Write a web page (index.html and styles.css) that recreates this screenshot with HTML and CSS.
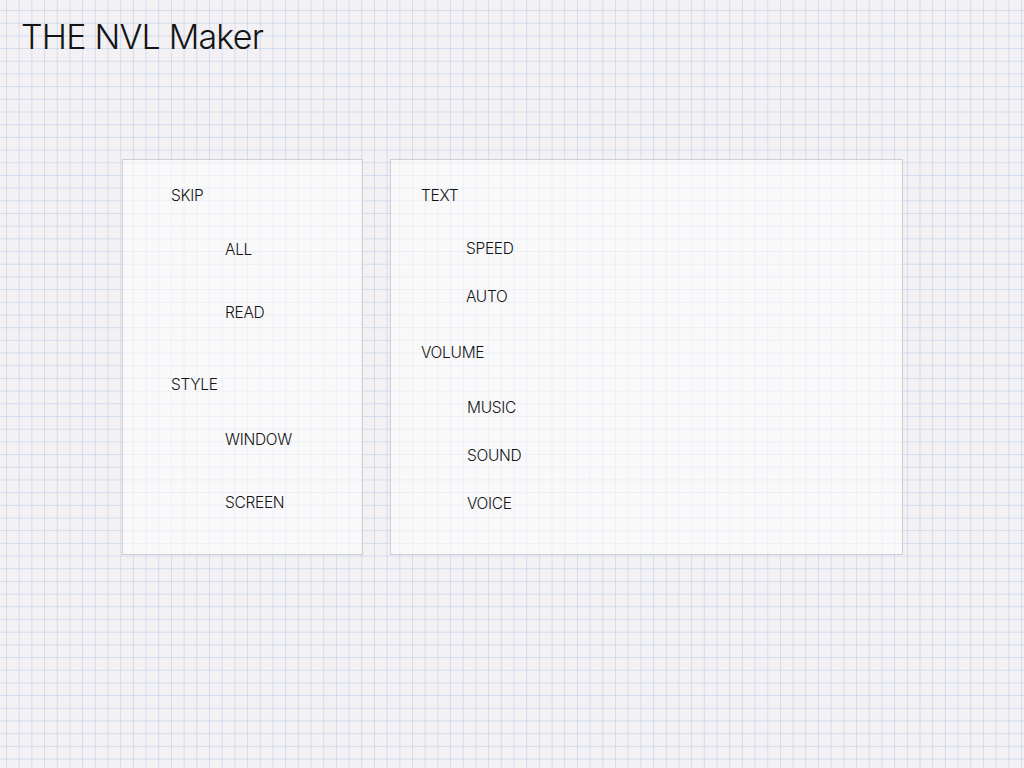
FILE: index.html
```html
<!DOCTYPE html>
<html>
<head>
<meta charset="utf-8">
<title>THE NVL Maker</title>
<link rel="stylesheet" href="styles.css">
</head>
<body>
<header class="title">THE NVL Maker</header>
<main class="panels">
  <section class="panel panel-left">
    <div class="heading h-skip">SKIP</div>
    <div class="item i-all">ALL</div>
    <div class="item i-read">READ</div>
    <div class="heading h-style">STYLE</div>
    <div class="item i-window">WINDOW</div>
    <div class="item i-screen">SCREEN</div>
  </section>
  <section class="panel panel-right">
    <div class="heading h-text">TEXT</div>
    <div class="item i-speed">SPEED</div>
    <div class="item i-auto">AUTO</div>
    <div class="heading h-volume">VOLUME</div>
    <div class="item i-music">MUSIC</div>
    <div class="item i-sound">SOUND</div>
    <div class="item i-voice">VOICE</div>
  </section>
</main>
</body>
</html>
```
FILE: styles.css
```css
html, body {
  margin: 0;
  padding: 0;
}
body {
  width: 1024px;
  height: 768px;
  overflow: hidden;
  font-family: "Inter", "DejaVu Sans", sans-serif;
  font-weight: 300;
  color: #141414;
  background-color: #f3f1f3;
  background-image:
    linear-gradient(to right, rgba(170, 196, 232, 0.45) 1px, transparent 1px),
    linear-gradient(to bottom, rgba(170, 196, 232, 0.45) 1px, transparent 1px);
  background-size: 12.7px 12.7px;
  background-position: 6px 10px;
}
.title {
  font-size: 34px;
  line-height: 40px;
  padding: 17px 0 0 21px;
  height: 40px;
  letter-spacing: -0.8px;
}
.panels {
  display: flex;
  gap: 27px;
  padding: 102px 0 0 122px;
}
.panel {
  box-sizing: border-box;
  height: 396px;
  border: 1px solid #cfcfd3;
  background: rgba(255, 255, 255, 0.55);
  display: flex;
  flex-direction: column;
  align-items: flex-start;
}
.panel-left {
  width: 241px;
  padding: 25px 0 0 48px;
}
.panel-right {
  width: 513px;
  padding: 25px 0 0 30px;
}
.heading, .item {
  font-size: 15.5px;
  line-height: 22px;
  height: 22px;
  letter-spacing: -0.3px;
}
.panel-left .item { margin-left: 54px; }
.panel-right .item { margin-left: 45px; }
.i-all { margin-top: 32px; }
.i-read { margin-top: 41px; }
.h-style { margin-top: 50px; }
.i-window { margin-top: 33px; }
.i-screen { margin-top: 41px; }
.i-speed { margin-top: 31px; }
.i-auto { margin-top: 26px; }
.h-volume { margin-top: 34px; }
.i-music { margin-top: 33px; }
.i-sound { margin-top: 26px; }
.i-voice { margin-top: 26px; }
.panel-right .i-music, .panel-right .i-sound, .panel-right .i-voice { margin-left: 46px; }
```
